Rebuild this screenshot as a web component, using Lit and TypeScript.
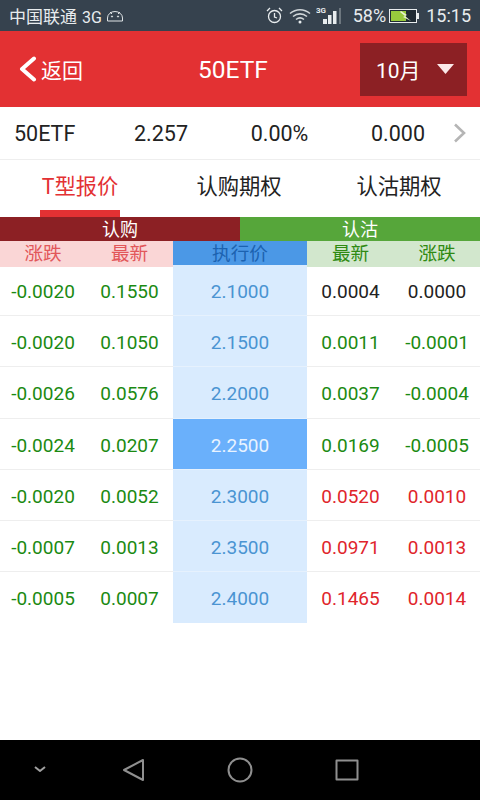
import { LitElement, html, css, svg } from "lit";
import { customElement } from "lit/decorators.js";

const rows: [string, string, string, string, string, string, string][] = [
  ["-0.0020", "0.1550", "2.1000", "0.0004", "0.0000", "k", "k"],
  ["-0.0020", "0.1050", "2.1500", "0.0011", "-0.0001", "g", "g"],
  ["-0.0026", "0.0576", "2.2000", "0.0037", "-0.0004", "g", "g"],
  ["-0.0024", "0.0207", "2.2500", "0.0169", "-0.0005", "g", "g"],
  ["-0.0020", "0.0052", "2.3000", "0.0520", "0.0010", "r", "r"],
  ["-0.0007", "0.0013", "2.3500", "0.0971", "0.0013", "r", "r"],
  ["-0.0005", "0.0007", "2.4000", "0.1465", "0.0014", "r", "r"],
];

@customElement("app-root")
export class AppRoot extends LitElement {
  static styles = css`
    :host {
      display: flex;
      flex-direction: column;
      width: 480px;
      height: 800px;
      background: #fff;
      overflow: hidden;
      font-family: Roboto, "Noto Sans CJK SC", sans-serif;
      color: #222;
    }
    .status {
      height: 31px;
      background: #36424e;
      color: #e8ecee;
      display: flex;
      align-items: center;
      padding: 0 9px 0 9px;
      font-size: 17px;
      flex: none;
    }
    .status .left { display: flex; align-items: center; gap: 4px; }
    .g3 { font-size: 16px; margin-left: 1px; }
    .status .right { margin-left: auto; display: flex; align-items: center; }
    .pct { font-size: 18px; margin-left: 12px; }
    .time { font-size: 18px; margin-left: 7px; }
    .batt { margin-left: 3px; }
    .wifi { margin-left: 6px; }
    .signal { margin-left: 5px; }
    .header {
      height: 76px;
      background: #e33133;
      display: flex;
      align-items: center;
      position: relative;
      color: #fff;
      flex: none;
    }
    .back {
      display: flex;
      align-items: center;
      margin-left: 19px;
      font-size: 21px;
      gap: 4px;
    }
    .title {
      position: absolute;
      left: 198px;
      font-size: 24.500px;
    }
    .month {
      margin-left: auto;
      margin-right: 13px;
      width: 107px;
      height: 53px;
      background: #8c2024;
      display: flex;
      align-items: center;
      font-size: 21px;
      box-sizing: border-box;
      padding: 0 13px 0 16px;
      justify-content: space-between;
      position: relative;
    }
    .info {
      height: 53px;
      box-sizing: border-box;
      border-bottom: 1px solid #eee;
      display: flex;
      align-items: center;
      font-size: 21.500px;
      flex: none;
      position: relative;
    }
    .info span { text-align: center; color: #222; box-sizing: border-box; }
    .info span:nth-child(1) { width: 100px; text-align: left; padding-left: 14px; }
    .info span:nth-child(2) { width: 122px; }
    .info span:nth-child(3) { width: 115px; }
    .info span:nth-child(4) { width: 116px; padding-left: 6px; }
    .tabs {
      height: 57px;
      display: flex;
      flex: none;
      font-size: 21.300px;
    }
    .tab {
      width: 160px;
      display: flex;
      justify-content: center;
      padding-top: 9px;
      box-sizing: border-box;
      position: relative;
      color: #222;
    }
    .tab + .tab { padding-right: 2px; }
    .tab.on { color: #e33133; }
    .tab.on::after {
      content: "";
      position: absolute;
      left: 40px;
      width: 80px;
      bottom: 0;
      height: 7px;
      background: #e33133;
    }
    .group {
      display: flex;
      height: 24px;
      flex: none;
      color: #fff;
      font-size: 18px;
      line-height: 26px;
      text-align: center;
    }
    .group div { width: 240px; }
    .put { background: #8c2024; }
    .call { background: #56a63a; }
    .cols {
      display: grid;
      grid-template-columns: 86px 87px 134px 87px 86px;
      height: 24px;
      line-height: 26px;
      text-align: center;
      font-size: 18.600px;
      flex: none;
    }
    .cols .a { background: #fad6d6; color: #e2575a; }
    .cols .b { background: #4b98e6; color: #1c62b0; }
    .cols .c { background: #d2e7cd; color: #2f8a12; }
    .row {
      display: grid;
      grid-template-columns: 86px 87px 134px 87px 86px;
      grid-template-rows: 51.200px;
      height: 51.200px;
      line-height: 53px;
      text-align: center;
      font-size: 19px;
      flex: none;
    }
    .row > div { border-bottom: 1px solid #eee; }
    .row .mid { background: #d9ebfe; color: #4a94d2; border-bottom-color: #e6f1fd; }
    .row .mid.on { background: #6ab0fb; color: #e8f3ff; }
    .row.last > div { border-bottom: none; }
    .g { color: #1b8a12; }
    .k { color: #222; }
    .r { color: #e0252b; }
    .spacer { flex: 1; }
    .nav {
      height: 60px;
      background: #000;
      flex: none;
      position: relative;
    }
    .nav svg { display: block; }
  `;

  render() {
    return html`
      <div class="status">
        <div class="left">
          <span>中国联通<span class="g3"> 3G</span></span>
          <svg width="18" height="12" viewBox="0 0 18 12" fill="none" stroke="#dfe4e6" stroke-width="1">
            <path d="M1.500 11V8a7.500 6.500 0 0 1 15 0v3zM4 2l2 2M14 2l-2 2" />
            <circle cx="6" cy="6.500" r=".6" fill="#dfe4e6" />
            <circle cx="12" cy="6.500" r=".6" fill="#dfe4e6" />
          </svg>
        </div>
        <div class="right">
          <svg width="17" height="17" viewBox="0 0 17 17" fill="none" stroke="#e8ecee" stroke-width="1.300">
            <circle cx="8.500" cy="9.500" r="6" />
            <path d="M8.500 6v4l2.500 1M1 4l3-3M16 4l-3-3" />
          </svg>
          <svg class="wifi" width="22" height="16" viewBox="0 0 22 16" fill="none" stroke="#cfd5d8" stroke-width="1.600">
            <path d="M1 5.500c6-5 14-5 20 0M4 8.500c4.200-3.500 9.800-3.500 14 0M7 11.500c2.500-2 5.500-2 8 0" />
            <circle cx="11" cy="14" r="1.500" fill="#e8ecee" stroke="none" />
          </svg>
          <svg class="signal" width="25" height="20" viewBox="0 0 25 20">
            <text x="0" y="7" font-size="8" font-family="Roboto" font-weight="700" fill="#e8ecee">3G</text>
            <rect x="7" y="13" width="4" height="5" fill="#e8ecee" />
            <rect x="12" y="9" width="3.500" height="9" fill="#e8ecee" />
            <rect x="17" y="5" width="3.500" height="13" fill="#e8ecee" />
            <rect x="23" y="2" width="2" height="16" fill="#6d777f" />
          </svg>
          <span class="pct">58%</span>
          <svg class="batt" width="30" height="14" viewBox="0 0 30 14">
            <rect x="0.500" y="0.500" width="27" height="13" fill="#1f2a33" stroke="#e8ecee" />
            <rect x="2" y="2" width="15" height="10" fill="#97c93d" />
            <rect x="28" y="4" width="2" height="6" fill="#e8ecee" />
            <path d="M12 2l6 4-2 1 6 5-8-4 2-1-5-4z" fill="#e8f2d0" />
          </svg>
          <span class="time">15:15</span>
        </div>
      </div>
      <div class="header">
        <div class="back">
          <svg width="18" height="26" viewBox="0 0 18 26" fill="none" stroke="#fff" stroke-width="4" stroke-linecap="round" stroke-linejoin="round">
            <path d="M15 2.500L3 13l12 10.500" />
          </svg>
          <span>返回</span>
        </div>
        <div class="title">50ETF</div>
        <div class="month">
          <span>10月</span>
          <svg width="17" height="10" viewBox="0 0 17 10"><path d="M0 0h17l-8.500 10z" fill="#fbe9e9" /></svg>
        </div>
      </div>
      <div class="info">
        <span>50ETF</span><span>2.257</span><span>0.00%</span><span>0.000</span>
        <svg width="14" height="20" viewBox="0 0 14 20" fill="none" stroke="#b5b5b5" stroke-width="2.600">
          <path d="M2 1.500L11 10l-9 8.500" />
        </svg>
      </div>
      <div class="tabs">
        <div class="tab on">T型报价</div>
        <div class="tab">认购期权</div>
        <div class="tab">认沽期权</div>
      </div>
      <div class="group">
        <div class="put">认购</div>
        <div class="call">认沽</div>
      </div>
      <div class="cols">
        <div class="a">涨跌</div>
        <div class="a">最新</div>
        <div class="b">执行价</div>
        <div class="c">最新</div>
        <div class="c">涨跌</div>
      </div>
      ${rows.map(
        (r, i) => html`
          <div class="row ${i === rows.length - 1 ? "last" : ""}">
            <div class="g">${r[0]}</div>
            <div class="g">${r[1]}</div>
            <div class="mid ${i === 3 ? "on" : ""}">${r[2]}</div>
            <div class="${r[5]}">${r[3]}</div>
            <div class="${r[6]}">${r[4]}</div>
          </div>
        `
      )}
      <div class="spacer"></div>
      <div class="nav">
        <svg width="480" height="60" viewBox="0 0 480 60" fill="none" stroke="#8f8f8f" stroke-width="2" stroke-linejoin="round">
          ${svg`
            <path d="M35 27l5 4 5-4" stroke="#a0a0a0" />
            <path d="M143 20v20l-19-10z" />
            <circle cx="240" cy="30" r="11.500" />
            <rect x="336.500" y="20.500" width="21" height="19" />
          `}
        </svg>
      </div>
    `;
  }
}
